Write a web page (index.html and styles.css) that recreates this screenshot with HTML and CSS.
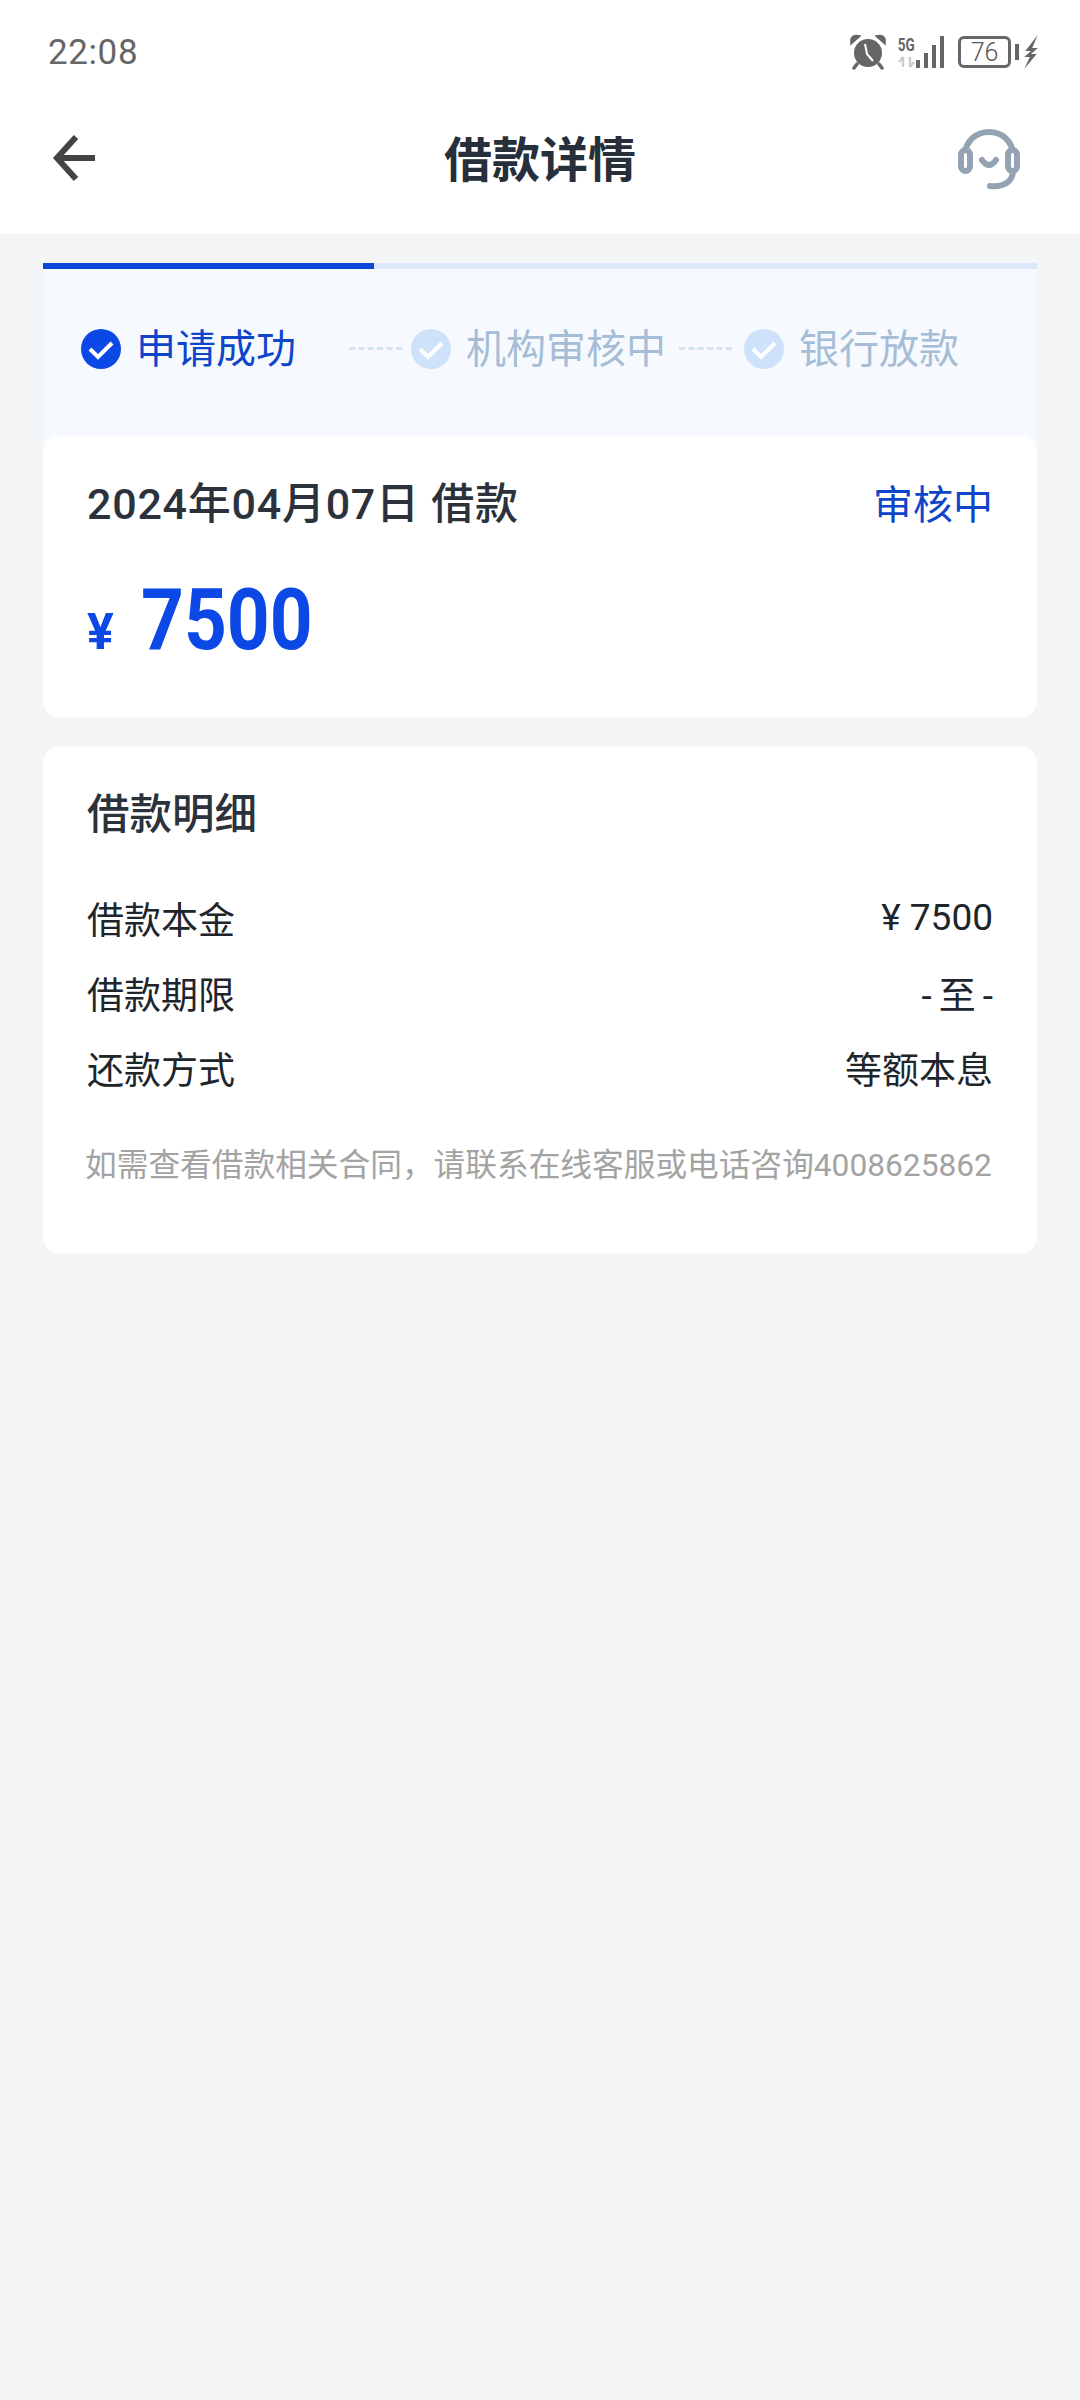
FILE: index.html
```html
<!DOCTYPE html>
<html lang="zh-CN">

<head>
    <meta charset="UTF-8">
    <meta name="viewport" content="width=device-width, initial-scale=1.0">
    <title>借款详情</title>
    <link rel="stylesheet" href="styles.css">
</head>

<body>
    <header class="top">
        <div class="status-bar">
            <span class="time">22:08</span>
            <div class="status-icons">
                <svg class="ic-alarm" width="36" height="36" viewBox="0 0 36 36">
                    <path d="M1 10 L10 2 Q3 0 1 5 Z M35 10 L26 2 Q33 0 35 5 Z" fill="#666" stroke="#666" stroke-width="1.5"/>
                    <circle cx="18" cy="19" r="14" fill="#666"/>
                    <path d="M7 30 L4 34 M29 30 L32 34" stroke="#666" stroke-width="3.5" stroke-linecap="round"/>
                    <path d="M15 10 L17 20 L23 27" fill="none" stroke="#fff" stroke-width="2"/>
                </svg>
                <div class="net">
                    <span class="net-label">5G</span>
                    <svg width="17" height="12" viewBox="0 0 17 12">
                        <path d="M5 1 V11 M5 1 L1 6 M12 1 V11 M12 11 L16 6" fill="none" stroke="#ccc" stroke-width="2.4"/>
                    </svg>
                </div>
                <svg class="ic-signal" width="30" height="32" viewBox="0 0 30 32">
                    <rect x="0" y="24" width="4" height="8" fill="#666"/>
                    <rect x="8" y="17" width="4" height="15" fill="#666"/>
                    <rect x="16" y="9" width="4" height="23" fill="#666"/>
                    <rect x="24" y="0" width="4" height="32" fill="#666"/>
                </svg>
                <div class="battery"><span>76</span></div>
                <span class="battery-cap"></span>
                <svg class="ic-bolt" width="16" height="34" viewBox="0 0 14 34" preserveAspectRatio="none">
                    <path d="M13 0 L2 16 L7 16 L1 22 L6 22 L1 34 L12 19 L7 19 L13 13 L8 13 Z" fill="#666"/>
                </svg>
            </div>
        </div>
        <nav class="nav">
            <svg class="back" width="46" height="46" viewBox="0 0 46 46">
                <path d="M43 23 H6 M24 2 L5 23 L24 44" fill="none" stroke="#444" stroke-width="6"/>
            </svg>
            <h1>借款详情</h1>
            <svg class="service" width="62" height="62" viewBox="0 0 62 62">
                <path d="M7 28 C7 -4 55 -4 55 28" fill="none" stroke="#94a3b3" stroke-width="6"/>
                <rect x="3" y="22" width="9" height="21" rx="4.5" fill="#fff" stroke="#94a3b3" stroke-width="6"/>
                <rect x="50" y="22" width="9" height="21" rx="4.5" fill="#fff" stroke="#94a3b3" stroke-width="6"/>
                <path d="M24 32 Q31 42 38 32" fill="none" stroke="#94a3b3" stroke-width="6" stroke-linecap="round"/>
                <path d="M55 44 C54 54 46 59 32 58" fill="none" stroke="#94a3b3" stroke-width="6" stroke-linecap="round"/>
            </svg>
        </nav>
    </header>

    <main class="content">
        <section class="steps">
            <div class="progress"><span class="progress-done"></span></div>
            <div class="step-row">
                <div class="step active">
                    <svg class="check" width="40" height="40" viewBox="0 0 40 40">
                        <circle cx="20" cy="20" r="20" fill="#0b48e6"/>
                        <path d="M9 20 L17 28 L31 14" fill="none" stroke="#fff" stroke-width="4"/>
                    </svg>
                    <span>申请成功</span>
                </div>
                <span class="dash"></span>
                <div class="step">
                    <svg class="check" width="40" height="40" viewBox="0 0 40 40">
                        <circle cx="20" cy="20" r="20" fill="#cfe2fb"/>
                        <path d="M9 20 L17 28 L31 14" fill="none" stroke="#fff" stroke-width="4"/>
                    </svg>
                    <span>机构审核中</span>
                </div>
                <span class="dash"></span>
                <div class="step">
                    <svg class="check" width="40" height="40" viewBox="0 0 40 40">
                        <circle cx="20" cy="20" r="20" fill="#cfe2fb"/>
                        <path d="M9 20 L17 28 L31 14" fill="none" stroke="#fff" stroke-width="4"/>
                    </svg>
                    <span>银行放款</span>
                </div>
            </div>
        </section>

        <section class="card summary">
            <div class="summary-head">
                <span class="date">2024年04月07日 借款</span>
                <span class="state">审核中</span>
            </div>
            <div class="amount">
                <span class="yen">¥</span>
                <span class="num">7500</span>
            </div>
        </section>

        <section class="card detail">
            <h2>借款明细</h2>
            <div class="row"><span>借款本金</span><span>¥ 7500</span></div>
            <div class="row"><span>借款期限</span><span class="term">-至-</span></div>
            <div class="row"><span>还款方式</span><span>等额本息</span></div>
            <p class="note">如需查看借款相关合同，请联系在线客服或电话咨询4008625862</p>
        </section>
    </main>
</body>

</html>
```

FILE: styles.css
```css
* {
    box-sizing: border-box;
}

body {
    margin: 0;
    min-height: 2400px;
    font-family: Roboto, "Noto Sans CJK SC", sans-serif;
    background-color: #f3f5f7;
    color: #20252b;
}

.top {
    background-color: #fff;
    height: 234px;
}

.status-bar {
    height: 104px;
    padding: 0 41px 0 48px;
    display: flex;
    align-items: center;
    justify-content: space-between;
}

.time {
    font-size: 35px;
    letter-spacing: 0.6px;
    color: #666;
}

.status-icons {
    display: flex;
    align-items: center;
}

.net {
    width: 18px;
    margin-left: 11px;
    display: flex;
    flex-direction: column;
    align-items: center;
    gap: 2px;
}

.net-label {
    font-size: 18px;
    line-height: 18px;
    font-weight: 700;
    color: #666;
    transform: scaleX(0.75);
}

.ic-signal {
    margin-left: 1px;
}

.battery {
    width: 53px;
    height: 32px;
    margin-left: 12px;
    border: 3px solid #666;
    border-radius: 6px;
    display: flex;
    align-items: center;
    justify-content: center;
    font-size: 25px;
    font-weight: 300;
    color: #555;
}

.battery-cap {
    width: 4px;
    height: 16px;
    margin: 0 4px 0 4px;
    background-color: #666;
}

.nav {
    height: 106px;
    padding: 0 60px;
    display: grid;
    grid-template-columns: 1fr auto 1fr;
    align-items: center;
}

.back {
    margin-left: -8px;
    margin-top: 2px;
}

.service {
    justify-self: end;
    margin-top: 3px;
}

.nav h1 {
    margin: 0 0 3px;
    font-size: 48px;
    font-weight: 700;
    color: #262f3a;
}

.content {
    padding: 29px 43px 0;
}

.steps {
    height: 182px;
    background-color: #f6faff;
}

.progress {
    height: 6px;
    background-color: #dce9fc;
}

.progress-done {
    display: block;
    width: 331px;
    height: 6px;
    background-color: #0d47d8;
}

.step-row {
    height: 158px;
    padding-left: 38px;
    display: flex;
    align-items: center;
}

.step {
    display: flex;
    align-items: center;
    gap: 15px;
    font-size: 40px;
    color: #a6bdd6;
}

.step span {
    padding-bottom: 5px;
}

.step.active {
    color: #0f45c9;
}

.step:last-child {
    margin-left: 3px;
}

.check {
    margin-top: 1px;
}

.dash {
    width: 53px;
    margin: 0 9px 0 13px;
    border-top: 3px dashed #d5e4ee;
}

.step.active + .dash {
    margin-left: 53px;
}

.card {
    background-color: #fff;
    border-radius: 16px;
    padding: 0 44px;
}

.summary {
    margin-top: -9px;
    height: 281px;
    position: relative;
}

.summary-head {
    height: 95px;
    display: flex;
    align-items: flex-start;
    justify-content: space-between;
}

.date {
    margin-top: 40px;
    font-size: 43px;
    line-height: 56px;
    font-weight: 500;
    letter-spacing: 0.75px;
    color: #2b323b;
}

.state {
    margin-top: 42px;
    font-size: 40px;
    line-height: 56px;
    color: #0f45c9;
}

.amount {
    margin-top: 39px;
    display: flex;
    align-items: baseline;
    color: #0b48e6;
    font-weight: 700;
}

.yen {
    font-size: 50px;
    width: 54px;
}

.num {
    display: inline-block;
    font-size: 86px;
    line-height: 100px;
    transform: scaleX(0.87);
    transform-origin: left center;
}

.detail {
    margin-top: 30px;
    height: 506px;
}

.detail h2 {
    margin: 0 0 37px;
    padding-top: 40px;
    font-size: 42.5px;
    line-height: 56px;
    font-weight: 500;
    color: #2b323b;
}

.row {
    height: 75px;
    display: flex;
    align-items: center;
    justify-content: space-between;
    font-size: 37px;
}

.term {
    letter-spacing: 7px;
    margin-right: -7px;
}

.note {
    margin: 38px -2px 0 -2px;
    font-size: 31.7px;
    line-height: 46px;
    color: #a3a3a3;
    white-space: nowrap;
}
```
